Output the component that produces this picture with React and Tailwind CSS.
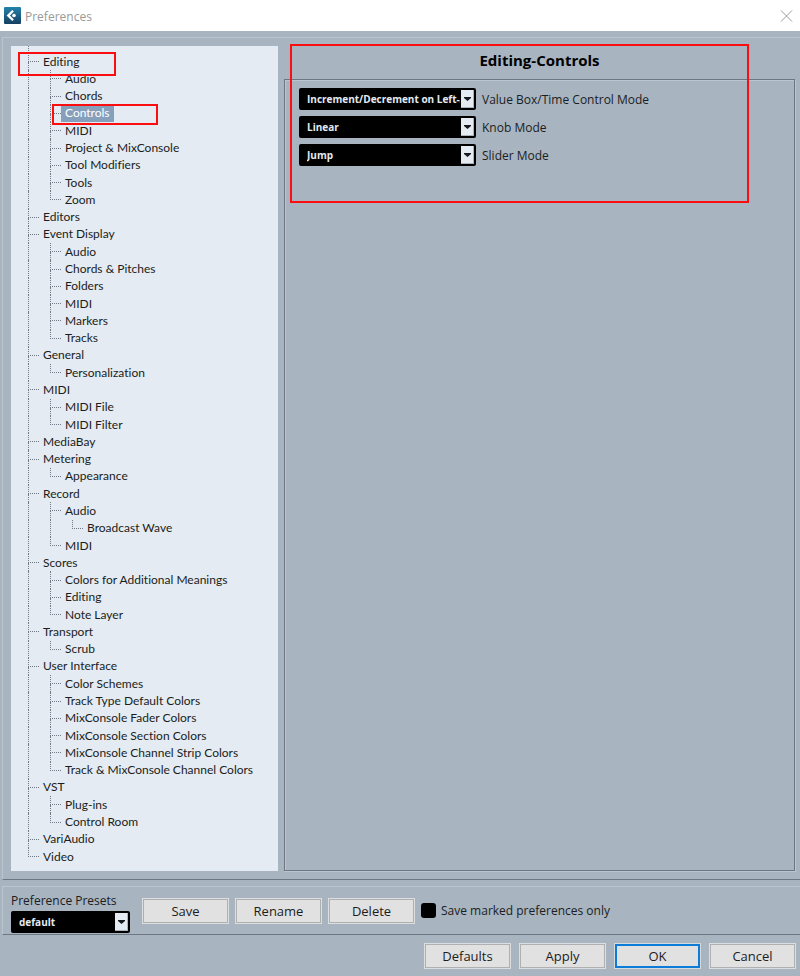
import React from 'react';

const tree = [
  { label: 'Editing', mark: 'section', children: [
    { label: 'Audio' },
    { label: 'Chords' },
    { label: 'Controls', mark: 'page', selected: true },
    { label: 'MIDI' },
    { label: 'Project & MixConsole' },
    { label: 'Tool Modifiers' },
    { label: 'Tools' },
    { label: 'Zoom' },
  ] },
  { label: 'Editors' },
  { label: 'Event Display', children: [
    { label: 'Audio' },
    { label: 'Chords & Pitches' },
    { label: 'Folders' },
    { label: 'MIDI' },
    { label: 'Markers' },
    { label: 'Tracks' },
  ] },
  { label: 'General', children: [{ label: 'Personalization' }] },
  { label: 'MIDI', children: [{ label: 'MIDI File' }, { label: 'MIDI Filter' }] },
  { label: 'MediaBay' },
  { label: 'Metering', children: [{ label: 'Appearance' }] },
  { label: 'Record', children: [
    { label: 'Audio', children: [{ label: 'Broadcast Wave' }] },
    { label: 'MIDI' },
  ] },
  { label: 'Scores', children: [
    { label: 'Colors for Additional Meanings' },
    { label: 'Editing' },
    { label: 'Note Layer' },
  ] },
  { label: 'Transport', children: [{ label: 'Scrub' }] },
  { label: 'User Interface', children: [
    { label: 'Color Schemes' },
    { label: 'Track Type Default Colors' },
    { label: 'MixConsole Fader Colors' },
    { label: 'MixConsole Section Colors' },
    { label: 'MixConsole Channel Strip Colors' },
    { label: 'Track & MixConsole Channel Colors' },
  ] },
  { label: 'VST', children: [{ label: 'Plug-ins' }, { label: 'Control Room' }] },
  { label: 'VariAudio' },
  { label: 'Video' },
];

// guides holds one flag per ancestor: does its vertical line continue past this row
const flatten = (nodes, guides = []) =>
  nodes.flatMap((node, i) => {
    const last = i === nodes.length - 1;
    return [{ ...node, guides, last }, ...flatten(node.children || [], [...guides, !last])];
  });

const rows = flatten(tree);

const marks = {
  section: '-top-px left-[7px] h-6 w-[98px]',
  page: '-top-px left-[41px] h-[21px] w-[106px]',
};

const modes = [
  { id: 'value-box', label: 'Value Box/Time Control Mode', value: 'Increment/Decrement on Left-/Right-Click' },
  { id: 'knob', label: 'Knob Mode', value: 'Linear' },
  { id: 'slider', label: 'Slider Mode', value: 'Jump' },
];

function TreeRow({ row }) {
  return (
    <li className="relative flex min-h-[17px] flex-1 pl-[17px]">
      {row.guides.map((open, i) => (
        <span key={i} className={`w-[22px] border-l border-dotted ${open ? 'border-[#6f7a86]' : 'border-transparent'}`} />
      ))}
      <span className="flex w-[11px] flex-col">
        <span className="flex-1 border-b border-l border-dotted border-[#6f7a86]" />
        <span className={`flex-1 ${row.last ? '' : 'border-l border-dotted border-[#6f7a86]'}`} />
      </span>
      <a
        href="#"
        className={`flex items-center px-1 font-['Lato','Open_Sans',sans-serif] text-[12px] leading-4 whitespace-nowrap [font-variant-ligatures:none] ${row.selected ? 'bg-[#86a0bc] text-white' : 'text-[#1b1d20]'}`}
      >
        {row.label}
      </a>
      {row.mark && <span className={`pointer-events-none absolute z-10 border-2 border-[#fb0d10] ${marks[row.mark]}`} />}
    </li>
  );
}

function Dropdown({ id, value, className }) {
  return (
    <div className={`relative h-[22px] rounded-[2px] bg-black ${className}`}>
      <select id={id} defaultValue={value} className="block h-full w-full appearance-none overflow-hidden bg-transparent pr-4 pl-2 text-[10px] font-bold text-[#e4ebf3]">
        <option>{value}</option>
      </select>
      <span className="pointer-events-none absolute top-0.5 right-0.5 bottom-0.5 flex w-[13px] items-center justify-center border-r border-b border-[#aab3bd] bg-[#e4ebf3]">
        <svg width="7" height="4" viewBox="0 0 7 4">
          <path d="M0 0h7v1L3.5 4 0 1z" fill="#17191c" />
        </svg>
      </span>
    </div>
  );
}

function Button({ children, primary }) {
  return (
    <button
      className={`h-[26px] w-[87px] border bg-[#e1e1e1] text-[13px] leading-4 text-[#1c1c1c] ${
        primary ? 'border-[#d5dadf] inset-ring-2 inset-ring-[#0c7cd8]' : 'border-[#dcdfe2] inset-ring inset-ring-[#b0b0b0]'
      }`}
    >
      {children}
    </button>
  );
}

export default function App() {
  return (
    <div className="flex min-h-screen flex-col bg-[#a8b4c0] font-['Open_Sans','Noto_Sans',sans-serif] text-[#1b1d20]">
      <header className="flex h-[31px] items-center bg-white pr-[7px] pl-1">
        <svg width="17" height="17" viewBox="0 0 17 17">
          <defs>
            <linearGradient id="logo" x1="0" y1="0" x2="0" y2="1">
              <stop offset="0" stopColor="#2383ac" />
              <stop offset="1" stopColor="#153f62" />
            </linearGradient>
          </defs>
          <rect width="17" height="17" rx="1" fill="url(#logo)" />
          <path d="M8.2 2.9L2.6 8.5l5.6 5.6 1.7-1.7-3.9-3.9 3.9-3.9z" fill="#fff" />
          <circle cx="10" cy="8.5" r="1.8" fill="#fff" />
        </svg>
        <h1 className="ml-1 flex-1 pt-0.5 text-[12px] text-[#999]">Preferences</h1>
        <button aria-label="Close">
          <svg width="13" height="12" viewBox="0 0 13 12" stroke="#999" fill="none">
            <path d="M1 .5l11 11M12 .5l-11 11" />
          </svg>
        </button>
      </header>

      <main className="mt-1.5 ml-0.5 flex flex-1 gap-1.5 border-t border-b border-l border-t-[#bac5d0] border-b-[#6c7783] border-l-[#bac5d0] pt-2 pr-[5px] pb-2 pl-2">
        <nav className="flex w-[267px] shrink-0 flex-col bg-[#e4ebf3] pb-1.5">
          <div className="ml-[17px] h-[7px] border-l border-dotted border-[#6f7a86]" />
          <ul className="flex flex-1 flex-col">
            {rows.map((row, i) => <TreeRow key={i} row={row} />)}
          </ul>
        </nav>

        <section className="relative flex flex-1 flex-col">
          <h2 className="h-[33px] text-center text-[15px] leading-[28px] font-bold text-black">Editing-Controls</h2>
          <div className="flex flex-1 flex-col gap-1.5 border border-[#6c7783] px-[14px] pt-2 shadow-[1px_1px_0_#bac5d0,inset_1px_1px_0_#bac5d0]">
            {modes.map((mode) => (
              <div key={mode.id} className="flex items-center gap-1.5">
                <Dropdown id={mode.id} value={mode.value} className="w-[177px]" />
                <label htmlFor={mode.id} className="pt-0.5 text-[12px] leading-4">{mode.label}</label>
              </div>
            ))}
          </div>
          <div className="pointer-events-none absolute -top-0.5 right-[46px] left-1.5 h-[159px] border-2 border-[#fb0d10]" />
        </section>
      </main>

      <section className="mt-1.5 ml-0.5 flex border-t border-b border-l border-t-[#bac5d0] border-b-[#6c7783] border-l-[#bac5d0] pl-2">
        <div className="mr-3 pt-1.5 pb-px">
          <label htmlFor="preset" className="mb-0.5 block text-[12px] leading-4">Preference Presets</label>
          <Dropdown id="preset" value="default" className="w-[119px]" />
        </div>
        <div className="flex items-center gap-1.5">
          <Button>Save</Button>
          <Button>Rename</Button>
          <Button>Delete</Button>
          <label className="flex items-center gap-[5px] text-[12px] leading-4">
            <input type="checkbox" className="h-[15px] w-[15px] appearance-none rounded-[3px] bg-black" />
            Save marked preferences only
          </label>
        </div>
      </section>

      <footer className="flex justify-end gap-2 pt-2 pr-1 pb-[7px]">
        <Button>Defaults</Button>
        <Button>Apply</Button>
        <Button primary>OK</Button>
        <Button>Cancel</Button>
      </footer>
    </div>
  );
}
